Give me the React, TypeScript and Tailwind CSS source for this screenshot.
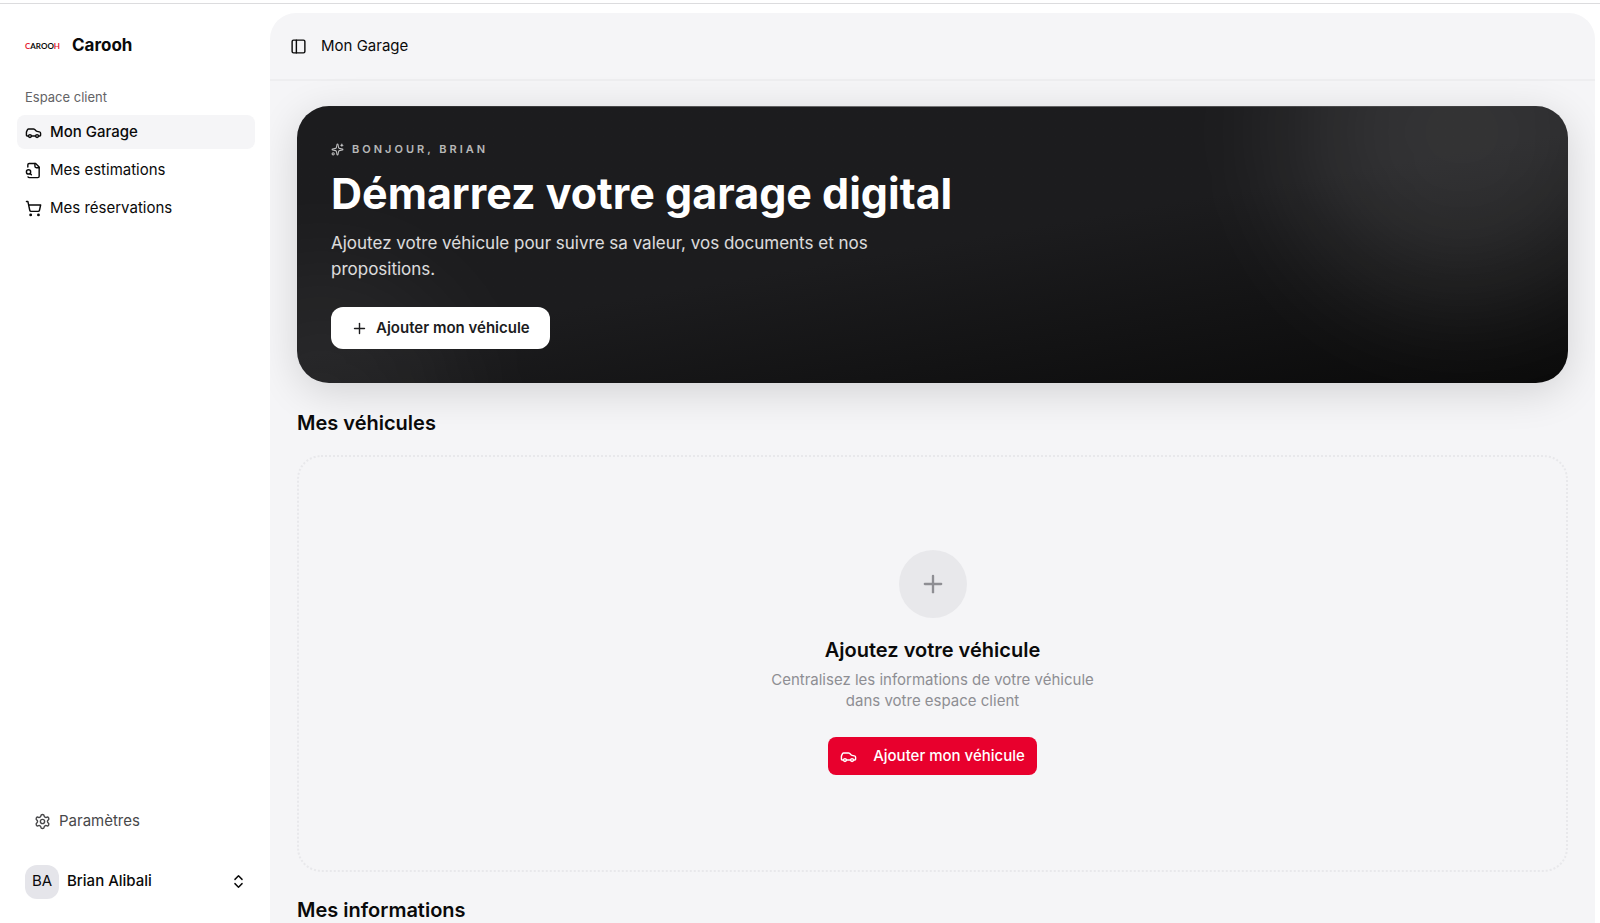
import { Car, ChevronsUpDown, PanelLeft, Plus, Settings, ShoppingCart, Sparkles } from "lucide-react";
import type { ComponentType } from "react";

interface NavItem {
  label: string;
  icon: ComponentType<{ size?: number }>;
  active?: boolean;
}

const NAV_ITEMS: NavItem[] = [
  { label: "Mon Garage", icon: Car, active: true },
  { label: "Mes estimations", icon: FileLens },
  { label: "Mes réservations", icon: ShoppingCart },
];

function FileLens({ size = 24 }: { size?: number }) {
  return (
    <svg
      width={size}
      height={size}
      viewBox="0 0 24 24"
      fill="none"
      stroke="currentColor"
      strokeWidth={2}
      strokeLinecap="round"
      strokeLinejoin="round"
      aria-hidden="true"
    >
      <path d="M14 2v4a2 2 0 0 0 2 2h4" />
      <path d="M4.268 21a2 2 0 0 0 1.727 1H18a2 2 0 0 0 2-2V7l-5-5H6a2 2 0 0 0-2 2v3" />
      <path d="m9 18-1.5-1.5" />
      <circle cx="5" cy="14" r="3" />
    </svg>
  );
}

function Logo() {
  return (
    <span className="w-9 shrink-0 font-['Lato',sans-serif] text-[8px] leading-none font-bold">
      <span className="text-[#e5192f]">C</span>AROO<span className="text-[#e5192f]">H</span>
    </span>
  );
}

function Sidebar() {
  return (
    <aside className="flex w-[270px] shrink-0 flex-col pt-[25px] pr-[15px] pb-[16px] pl-[17px]">
      <a href="#" className="flex h-[34px] items-center gap-[11px] px-2">
        <Logo />
        <span className="text-[17px] font-bold">Carooh</span>
      </a>

      <nav aria-labelledby="nav-label" className="mt-[18px]">
        <p id="nav-label" className="flex h-[34px] items-center px-2 text-[13px] text-[#636366]">
          Espace client
        </p>
        <ul className="flex flex-col gap-1">
          {NAV_ITEMS.map(({ label, icon: Icon, active }) => (
            <li key={label}>
              <a
                href="#"
                aria-current={active ? "page" : undefined}
                className={`flex h-[34px] items-center gap-2 rounded-lg px-2 text-[15px] ${
                  active ? "bg-[#f5f5f7] font-medium" : ""
                }`}
              >
                <Icon size={17} />
                {label}
              </a>
            </li>
          ))}
        </ul>
      </nav>

      <a href="#" className="mt-auto flex h-[34px] items-center gap-2 px-[17px] text-[15px] text-[#48484a]">
        <Settings size={17} />
        Paramètres
      </a>

      <button type="button" className="mt-[18px] flex h-[51px] items-center gap-2 px-2 text-[15px]">
        <span className="flex size-[34px] items-center justify-center rounded-xl bg-[#e5e5ea]">BA</span>
        <span className="font-medium">Brian Alibali</span>
        <ChevronsUpDown size={17} className="ml-auto" />
      </button>
    </aside>
  );
}

function Hero() {
  return (
    <section className="relative overflow-hidden rounded-[32px] bg-linear-170 from-[#1c1c1e] from-50% to-[#0a0a0a] p-[34px] text-white">
      {/* halos */}
      <div className="absolute -top-36 -right-16 size-[340px] rounded-full bg-white/10 blur-3xl" />
      <div className="absolute -bottom-40 -left-28 size-[272px] rounded-full bg-white/6 blur-3xl" />
      <div className="absolute inset-x-0 top-0 h-px bg-linear-to-r from-transparent via-white/40 to-transparent" />

      <div className="relative">
        <p className="flex items-center gap-2 text-[11px] leading-[18px] font-semibold tracking-[3px] text-white/70 uppercase">
          <Sparkles size={13} />
          Bonjour, Brian
        </p>
        <h1 className="mt-[14px] text-[43px] leading-[42px] font-bold">Démarrez votre garage digital</h1>
        <p className="mt-4 max-w-[570px] text-[17px] leading-[26px] text-white/85">
          Ajoutez votre véhicule pour suivre sa valeur, vos documents et nos propositions.
        </p>
        <button
          type="button"
          className="mt-[25px] flex h-[42px] items-center gap-2 rounded-xl bg-white px-5 text-[15px] font-semibold text-[#1c1c1e]"
        >
          <Plus size={17} />
          Ajouter mon véhicule
        </button>
      </div>
    </section>
  );
}

function EmptyGarage() {
  return (
    <div className="flex h-[417px] flex-col items-center rounded-3xl border-2 border-dotted border-[#e8e8eb] pt-[93px] text-center">
      <div className="flex size-[68px] items-center justify-center rounded-full bg-[#e8e8eb]">
        <Plus size={28} className="text-[#8e8e93]" />
      </div>
      <h3 className="mt-[17px] text-[20px] leading-[30px] font-semibold">Ajoutez votre véhicule</h3>
      <p className="mt-1 max-w-[340px] text-[15px] leading-[21px] text-[#8e8e93]">
        Centralisez les informations de votre véhicule dans votre espace client
      </p>
      <button
        type="button"
        className="mt-[26px] flex h-[38px] items-center gap-4 rounded-lg bg-[#e8002d] px-3 text-[15px] font-medium text-white"
      >
        <Car size={17} />
        Ajouter mon véhicule
      </button>
    </div>
  );
}

export default function App() {
  return (
    <div className="flex h-screen flex-col overflow-hidden bg-white font-['Inter',sans-serif] text-[#0a0a0a]">
      <div className="mt-[3px] h-px shrink-0 bg-[#dcdcde]" />
      <div className="flex min-h-0 flex-1">
        <Sidebar />
        <main className="mt-[9px] mr-[5px] min-w-0 flex-1 overflow-hidden rounded-t-[26px] bg-[#f5f5f7]">
          <header className="flex h-[68px] items-center gap-[14px] border-b-2 border-[#eeeef0] px-5">
            <button type="button" aria-label="Afficher le menu">
              <PanelLeft size={17} />
            </button>
            <span className="text-[15px]">Mon Garage</span>
          </header>
          <div className="px-[27px] pt-[25px]">
            <div className="rounded-[32px] shadow-[0_9px_42px_rgba(0,0,0,0.14)]">
              <Hero />
            </div>
            <h2 className="mt-[25px] mb-[17px] text-[20px] leading-[30px] font-semibold">Mes véhicules</h2>
            <EmptyGarage />
            <h2 className="mt-[23px] text-[20px] leading-[30px] font-semibold">Mes informations</h2>
          </div>
        </main>
      </div>
    </div>
  );
}
